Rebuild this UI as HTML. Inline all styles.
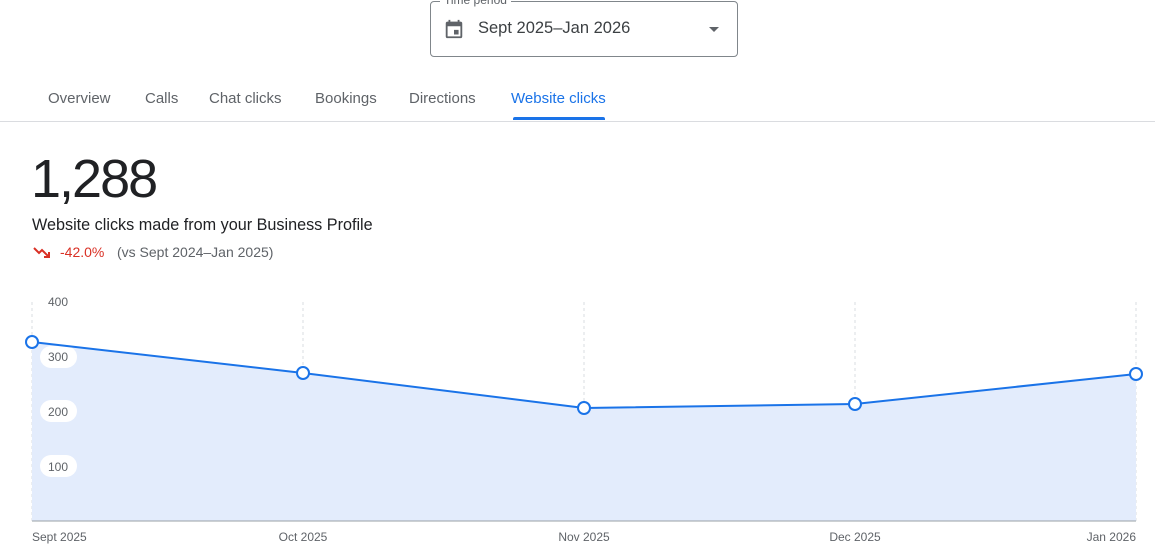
<!DOCTYPE html>
<html><head><meta charset="utf-8"><style>
body{margin:0;width:1155px;height:557px;background:#fff;font-family:"Liberation Sans",Roboto,sans-serif;position:relative;overflow:hidden}
.sel{position:absolute;left:430px;top:1px;width:306px;height:54px;border:1px solid #80868b;border-radius:4px}
.lbl{position:absolute;left:440px;top:-7px;background:#fff;padding:0 4px;font-size:12px;color:#5f6368}
.tabs{position:absolute;top:88px;left:0;width:1155px;height:33px;border-bottom:1px solid #dadce0}
.tab{position:absolute;top:2px;font-size:15px;color:#5f6368}
</style></head><body>
<div class="sel">
<svg style="position:absolute;left:12px;top:16px" width="22" height="22" viewBox="0 0 24 24"><path fill="#5f6368" d="M19 4h-1V2h-2v2H8V2H6v2H5a2 2 0 0 0-2 2v14a2 2 0 0 0 2 2h14a2 2 0 0 0 2-2V6a2 2 0 0 0-2-2zm0 16H5V9h14v11zM12 13h5v5h-5z"/></svg>
<div style="position:absolute;left:47px;top:17px;font-size:16.5px;color:#3c4043">Sept 2025–Jan 2026</div>
<div style="position:absolute;left:278px;top:25px;width:0;height:0;border-left:5px solid transparent;border-right:5px solid transparent;border-top:5px solid #5f6368"></div>
</div>
<div class="lbl">Time period</div>
<div class="tabs">
<span class="tab" style="left:48px">Overview</span>
<span class="tab" style="left:145px">Calls</span>
<span class="tab" style="left:209px">Chat clicks</span>
<span class="tab" style="left:315px">Bookings</span>
<span class="tab" style="left:409px">Directions</span>
<span class="tab" style="left:511px;color:#1a73e8">Website clicks</span>
<div style="position:absolute;left:513px;top:29px;width:92px;height:3px;background:#1a73e8;border-radius:2px 2px 0 0"></div>
</div>
<div style="position:absolute;left:31px;top:148px;font-size:54px;color:#202124;letter-spacing:-2px">1,288</div>
<div style="position:absolute;left:32px;top:216px;font-size:16.2px;color:#202124">Website clicks made from your Business Profile</div>
<svg style="position:absolute;left:33px;top:245px" width="18" height="14" viewBox="0 0 18 14"><path d="M1 3l5 5 3-3 6 6" stroke="#d93025" stroke-width="2" fill="none"/><path d="M11 12h5V7" stroke="#d93025" stroke-width="2" fill="none"/></svg>
<div style="position:absolute;left:60px;top:244px;font-size:14px;color:#d93025">-42.0%</div>
<div style="position:absolute;left:117px;top:244px;font-size:14px;color:#5f6368">(vs Sept 2024–Jan 2025)</div>
<svg style="position:absolute;left:0;top:0" width="1155" height="557">
<g stroke="#dadce0" stroke-dasharray="3,3"><line x1="32" y1="302" x2="32" y2="521"/><line x1="303" y1="302" x2="303" y2="521"/><line x1="584" y1="302" x2="584" y2="521"/><line x1="855" y1="302" x2="855" y2="521"/><line x1="1136" y1="302" x2="1136" y2="521"/></g>
<path d="M32 342L303 373L584 408L855 404L1136 374L1136 521L32 521Z" fill="#e3ecfc"/>
<line x1="32" y1="521" x2="1136" y2="521" stroke="#9aa0a6"/>
<g fill="#fff"><rect x="40" y="346" width="37" height="22" rx="11"/><rect x="40" y="400" width="37" height="22" rx="11"/><rect x="40" y="455" width="37" height="22" rx="11"/></g>
<g font-size="12" fill="#5f6368" font-family="Liberation Sans,sans-serif"><text x="48" y="306">400</text><text x="48" y="361">300</text><text x="48" y="416">200</text><text x="48" y="471">100</text>
<text x="32" y="541">Sept 2025</text><text x="303" y="541" text-anchor="middle">Oct 2025</text><text x="584" y="541" text-anchor="middle">Nov 2025</text><text x="855" y="541" text-anchor="middle">Dec 2025</text><text x="1136" y="541" text-anchor="end">Jan 2026</text></g>
<path d="M32 342L303 373L584 408L855 404L1136 374" stroke="#1a73e8" stroke-width="2" fill="none"/>
<g fill="#fff" stroke="#1a73e8" stroke-width="2"><circle cx="32" cy="342" r="6"/><circle cx="303" cy="373" r="6"/><circle cx="584" cy="408" r="6"/><circle cx="855" cy="404" r="6"/><circle cx="1136" cy="374" r="6"/></g>
</svg>
</body></html>
